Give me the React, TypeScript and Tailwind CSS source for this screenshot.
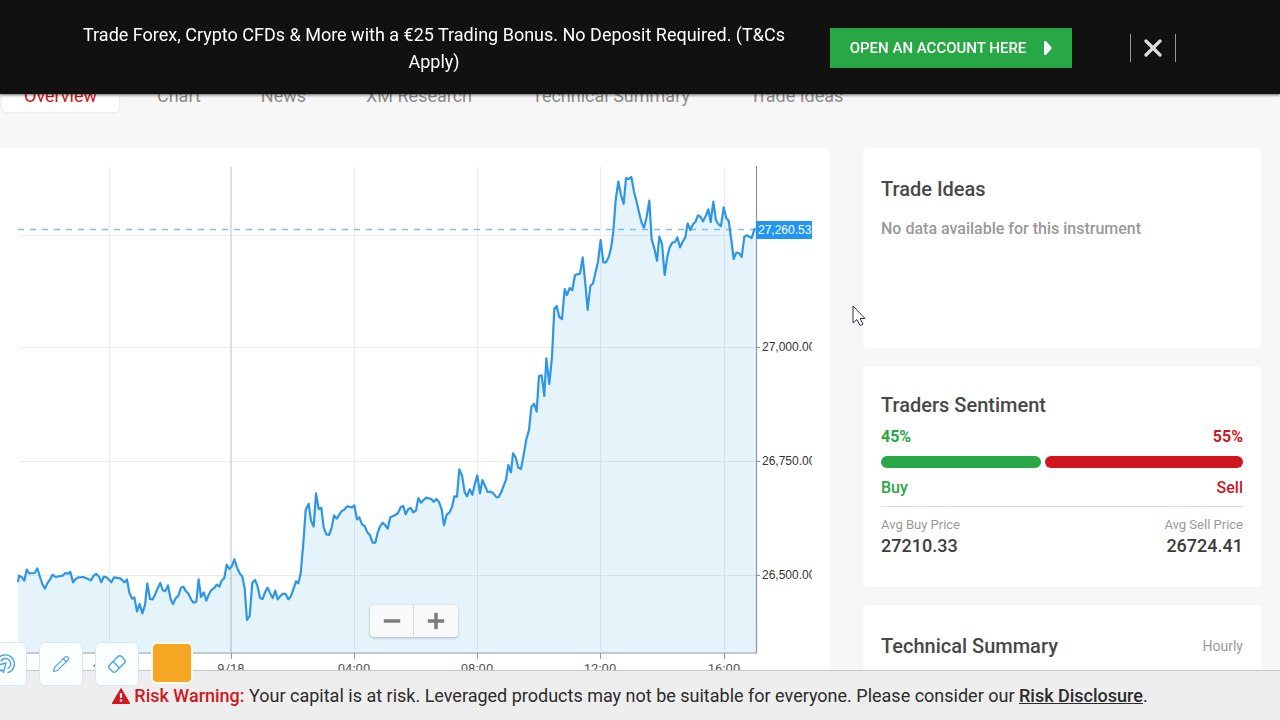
import React from 'react';
import { Minus, Plus, Pencil } from 'lucide-react';

const tabs = ['Overview', 'Chart', 'News', 'XM Research', 'Technical Summary', 'Trade Ideas'];

const priceTicks = [
  { y: 181, label: '27,000.00' },
  { y: 295, label: '26,750.00' },
  { y: 409, label: '26,500.00' },
];

const timeTicks = [
  { x: 109, label: '20:00' },
  { x: 231, label: '9/18' },
  { x: 354, label: '04:00' },
  { x: 477, label: '08:00' },
  { x: 600, label: '12:00' },
  { x: 724, label: '16:00' },
];

// x,y samples, three units to one chart pixel
const samples = `
54,1248 57,1229 66,1234 73,1244 80,1211 88,1222 104,1221 112,1207 119,1230 127,1254 135,1268 142,1252
150,1240 158,1226 166,1233 188,1229 196,1221 204,1223 211,1218 219,1249 227,1239 235,1234 250,1233 273,1243
281,1229 289,1224 297,1232 304,1249 311,1232 320,1234 334,1249 342,1234 361,1237 374,1249 381,1240 388,1280
396,1298 403,1294 411,1336 419,1314 427,1342 435,1317 442,1252 450,1299 458,1300 466,1284 473,1267 481,1251
488,1272 496,1276 504,1258 512,1300 519,1314 527,1297 535,1289 543,1265 550,1262 558,1276 566,1284 574,1302
581,1310 589,1307 596,1240 603,1293 611,1279 619,1304 627,1284 634,1272 642,1267 650,1256 658,1262 665,1244
673,1236 680,1196 688,1209 696,1200 703,1180 711,1204 719,1222 727,1232 734,1267 741,1362 749,1350 757,1250
765,1242 772,1258 780,1295 788,1299 795,1279 803,1265 811,1283 818,1296 826,1274 833,1300 841,1290 849,1283
857,1284 865,1300 873,1290 881,1267 888,1246 895,1252 902,1222 910,1132 917,1032 926,1013 933,1064 941,1082
948,982 956,1029 964,1025 971,1084 979,1105 987,1107 995,1085 1002,1048 1010,1058 1025,1035 1033,1031
1041,1021 1056,1024 1063,1018 1071,1060 1078,1054 1086,1075 1094,1080 1102,1099 1110,1108 1118,1130 1126,1130
1133,1100 1140,1082 1148,1070 1156,1078 1163,1088 1171,1054 1186,1047 1194,1041 1202,1024 1210,1020 1217,1045
1225,1029 1232,1026 1240,1039 1248,1034 1255,996 1263,1010 1278,995 1294,999 1301,1007 1309,999 1317,1008
1325,1030 1332,1078 1340,1046 1348,1040 1356,1024 1363,991 1371,992 1378,910 1386,928 1394,978 1401,991
1409,970 1417,986 1425,952 1432,928 1440,982 1447,942 1455,959 1463,978 1471,977 1480,982 1490,994 1496,993
1504,978 1510,962 1518,941 1525,897 1533,919 1539,862 1547,874 1555,905 1563,909 1570,872 1579,820 1587,792
1594,723 1602,713 1610,737 1617,630 1625,628 1633,690 1639,577 1648,654 1656,572 1661,470 1663,429 1670,420
1678,453 1686,459 1694,369 1701,387 1709,366 1717,372 1725,327 1740,323 1748,274 1756,352 1763,432 1771,360
1779,352 1786,322 1794,287 1802,222 1810,289 1818,289 1826,274 1833,247 1840,197 1847,102 1855,47 1863,87
1871,114 1878,36 1886,39 1894,33 1902,77 1910,107 1917,139 1925,170 1932,185 1940,152 1948,104 1955,220
1963,247 1971,284 1978,212 1986,234 1994,327 2002,272 2009,244 2017,230 2025,228 2032,214 2040,244 2048,227
2056,214 2063,172 2071,192 2079,175 2086,168 2094,148 2102,153 2109,166 2117,150 2125,130 2132,168 2140,107
2148,163 2156,175 2163,180 2171,124 2179,157 2186,164 2194,222 2201,279 2209,260 2217,261 2225,273 2233,212
2240,208 2248,212 2255,216 2263,190 2267,188`;

const line = samples
  .trim()
  .split(/\s+/)
  .map((pair) => pair.split(',').map((n) => Number(n) / 3).join(','))
  .join(' ');

function PriceChart() {
  return (
    <svg viewBox="0 0 812 520" className="block w-full" role="img" aria-label="Price chart">
      {[69, 181, 295, 409].map((y) => (
        <path key={y} d={`M20 ${y + 0.5}H756`} stroke="#ececec" />
      ))}
      {timeTicks.map((t) => (
        <path
          key={t.x}
          d={`M${t.x === 231 ? 231 : t.x + 0.5} 1V486`}
          stroke={t.x === 231 ? '#dedede' : '#ececec'}
          strokeWidth={t.x === 231 ? 2 : 1}
        />
      ))}
      <polygon points={`18,486 ${line} 756,486`} fill="#2b9fe2" fillOpacity="0.12" />
      <path d="M18 63.500H756" stroke="#7cc0e6" strokeWidth="1.5" strokeDasharray="6 6" />
      <polyline points={line} fill="none" stroke="#2f96e6" strokeWidth="2.2" strokeLinejoin="round" />
      <path d="M756.5 0V487M18 487H757" fill="none" stroke="#8e9499" strokeWidth="1.2" />

      {priceTicks.map((t) => (
        <g key={t.label}>
          <path d={`M757 ${t.y + 0.5}h3`} stroke="#8e9499" />
          <text x="762" y={t.y + 4} fontSize="12" fill="#333" fontFamily="Liberation Sans, sans-serif">
            {t.label}
          </text>
        </g>
      ))}
      {timeTicks.map((t) => (
        <g key={t.label}>
          <path d={`M${t.x + 0.5} 487v6`} stroke="#8e9499" />
          <text x={t.x} y="507" fontSize="13" textAnchor="middle" fill="#555">
            {t.label}
          </text>
        </g>
      ))}

      <rect x="756" y="55" width="56" height="18" fill="#2196f3" />
      <text x="758" y="68" fontSize="12" fill="#fff" fontFamily="Liberation Sans, sans-serif">
        27,260.53
      </text>
    </svg>
  );
}

function PromoBanner() {
  return (
    <header className="fixed inset-x-0 top-0 z-20 flex h-[94px] items-start bg-[#111] pl-[74px] shadow-[0_1px_3px_rgba(0,0,0,0.6)]">
      <p className="mt-[21px] w-[720px] text-center text-lg leading-[27px] text-white">
        Trade Forex, Crypto CFDs &amp; More with a €25 Trading Bonus. No Deposit Required. (T&amp;Cs Apply)
      </p>
      <a
        href="#open-account"
        className="mt-7 ml-9 flex h-10 w-[242px] shrink-0 items-center justify-center gap-[18px] bg-[#28a745] text-[15px] font-medium text-white"
      >
        <span className="whitespace-nowrap">OPEN AN ACCOUNT HERE</span>
        <svg viewBox="0 0 8 14" className="h-3.5 w-2" fill="currentColor" aria-hidden="true">
          <path d="M0 0h2l6 7-6 7H0z" />
        </svg>
      </a>
      <button
        type="button"
        aria-label="Close"
        className="mt-[34px] ml-[58px] flex h-7 w-[46px] items-center justify-center border-x border-[#999]"
      >
        <svg viewBox="0 0 18 18" className="h-[18px] w-[18px]" aria-hidden="true">
          <path d="M2 2l14 14M16 2L2 16" stroke="#ddd" strokeWidth="3.2" strokeLinecap="round" />
        </svg>
      </button>
    </header>
  );
}

function Card({ className = '', children }: { className?: string; children: React.ReactNode }) {
  return (
    <section className={`rounded-sm bg-white px-[18px] shadow-[0_0_3px_rgba(0,0,0,0.03)] ${className}`}>
      {children}
    </section>
  );
}

function TradersSentiment() {
  return (
    <Card className="h-[221px] pt-[25px]">
      <h2 className="text-xl leading-7 font-medium text-[#484848]">Traders Sentiment</h2>
      <div className="mt-1.5 flex justify-between leading-6 font-bold">
        <span className="text-[#28a745]">45%</span>
        <span className="text-[#cf1820]">55%</span>
      </div>
      <div className="mt-[7px] flex gap-1">
        <div className="h-3 w-[160px] rounded-full bg-[#28a745]" />
        <div className="h-3 flex-1 rounded-full bg-[#d2151e]" />
      </div>
      <div className="mt-2 flex justify-between border-b border-[#ddd] pb-1.5 leading-6 font-medium">
        <span className="text-[#28a745]">Buy</span>
        <span className="text-[#cf1820]">Sell</span>
      </div>
      <dl className="mt-2.5 flex justify-between">
        <div>
          <dt className="text-[13px] leading-4 text-[#999]">Avg Buy Price</dt>
          <dd className="text-lg leading-[26px] font-medium text-[#3c3c3c]">27210.33</dd>
        </div>
        <div className="text-right">
          <dt className="text-[13px] leading-4 text-[#999]">Avg Sell Price</dt>
          <dd className="text-lg leading-[26px] font-medium text-[#3c3c3c]">26724.41</dd>
        </div>
      </dl>
    </Card>
  );
}

const toolClass =
  'flex h-11 w-11 items-center justify-center rounded-md border border-[#d3e8f3] bg-[#fafeff] text-[#4aa3e8]';

function DrawingTools() {
  return (
    <div className="fixed bottom-[34px] left-[-17px] z-30 flex gap-3">
      <button type="button" aria-label="Pointer" className={toolClass}>
        <svg
          viewBox="0 0 22 22"
          className="h-[22px] w-[22px]"
          fill="none"
          stroke="currentColor"
          strokeWidth="1.4"
          strokeLinejoin="round"
          strokeLinecap="round"
        >
          <path d="M3 7.500A9 9 0 1 1 14 19.500" />
          <path d="M7 8A5.300 5.300 0 1 1 14 15.500" />
          <path d="M12 10L2.500 12.500l3 1.800L1.500 18.500l2 2 4.200-4 1.800 3z" />
        </svg>
      </button>
      <button type="button" aria-label="Pencil" className={toolClass}>
        <Pencil className="h-[18px] w-[18px]" strokeWidth={1.6} />
      </button>
      <button type="button" aria-label="Eraser" className={toolClass}>
        <svg viewBox="0 0 20 20" className="h-5 w-5" fill="none" stroke="currentColor" strokeWidth="1.4">
          <g transform="rotate(-45 10 10)">
            <rect x="1.500" y="5.500" width="17" height="9" rx="2.500" />
            <path d="M9 5.500v9" />
          </g>
        </svg>
      </button>
      <button
        type="button"
        aria-label="Colour"
        className="h-[42px] w-[42px] rounded-md border-2 border-[#fffaf0] bg-[#f5a623]"
      />
    </div>
  );
}

function RiskWarning() {
  return (
    <footer className="fixed inset-x-0 bottom-0 z-20 flex h-[50px] items-center justify-center border-t border-[#c8c8c8] bg-[#eee] pr-5 text-lg text-[#2b2b2b]">
      <svg viewBox="0 0 18 16" className="mr-1 h-4 w-[18px]" aria-hidden="true">
        <path d="M9 0.500L17.800 15.500H0.200z" fill="#cf1820" stroke="#cf1820" strokeLinejoin="round" />
        <path d="M9 5v5" stroke="#eee" strokeWidth="2.200" />
        <circle cx="9" cy="12.500" r="1.300" fill="#eee" />
      </svg>
      <p>
        <strong className="font-medium text-[#cf1820]">Risk Warning:</strong> Your capital is at risk. Leveraged
        products may not be suitable for everyone. Please consider our{' '}
        <a href="#risk-disclosure" className="font-medium underline">
          Risk Disclosure
        </a>
        .
      </p>
    </footer>
  );
}

export default function App() {
  return (
    <div className="h-screen overflow-hidden bg-[#f7f7f7] font-[Roboto,sans-serif]">
      <PromoBanner />

      <nav className="flex gap-4 pt-[76px] pl-0.5">
        {tabs.map((tab) => (
          <a
            key={tab}
            href="#tab"
            className={`rounded-sm px-[22px] pt-[7px] pb-[3px] text-lg leading-[26px] ${
              tab === 'Overview' ? 'bg-white text-[#cf1820] shadow-[0_0_2px_rgba(0,0,0,0.15)]' : 'text-[#8c8c8c]'
            }`}
          >
            {tab}
          </a>
        ))}
      </nav>

      <main className="mt-9 flex gap-[33px] pr-[19px]">
        <section className="relative min-w-0 flex-1 self-start rounded-sm bg-white pt-[18px] pr-[18px]">
          <PriceChart />
          <div className="absolute top-[457px] left-[370px] flex divide-x divide-[#ddd] rounded-sm bg-[#f7f9fa] text-[#7c7c7c] shadow-[0_1px_3px_rgba(0,0,0,0.25)]">
            <button type="button" aria-label="Zoom out" className="flex h-8 w-11 items-center justify-center">
              <Minus className="h-7 w-7" strokeWidth={3} strokeLinecap="butt" />
            </button>
            <button type="button" aria-label="Zoom in" className="flex h-8 w-11 items-center justify-center">
              <Plus className="h-7 w-7" strokeWidth={3} strokeLinecap="butt" />
            </button>
          </div>
        </section>

        <aside className="flex w-[398px] shrink-0 flex-col gap-[18px]">
          <Card className="h-[200px] pt-[27px]">
            <h2 className="text-xl leading-7 font-medium text-[#484848]">Trade Ideas</h2>
            <p className="mt-3.5 leading-6 font-medium text-[#999]">No data available for this instrument</p>
          </Card>
          <TradersSentiment />
          <Card className="flex h-[200px] items-start justify-between pt-[27px]">
            <h2 className="text-xl leading-7 font-medium text-[#484848]">Technical Summary</h2>
            <span className="text-sm leading-7 text-[#999]">Hourly</span>
          </Card>
        </aside>
      </main>

      {/* mouse pointer */}
      <svg viewBox="0 0 14 22" className="fixed top-[305px] left-[852px] z-40 h-[22px] w-3.5" aria-hidden="true">
        <path d="M1 1v17l4-3.500 3 6 3-1.500-3-5.500h5z" fill="#fff" stroke="#334" strokeLinejoin="round" />
      </svg>

      <DrawingTools />
      <RiskWarning />
    </div>
  );
}
